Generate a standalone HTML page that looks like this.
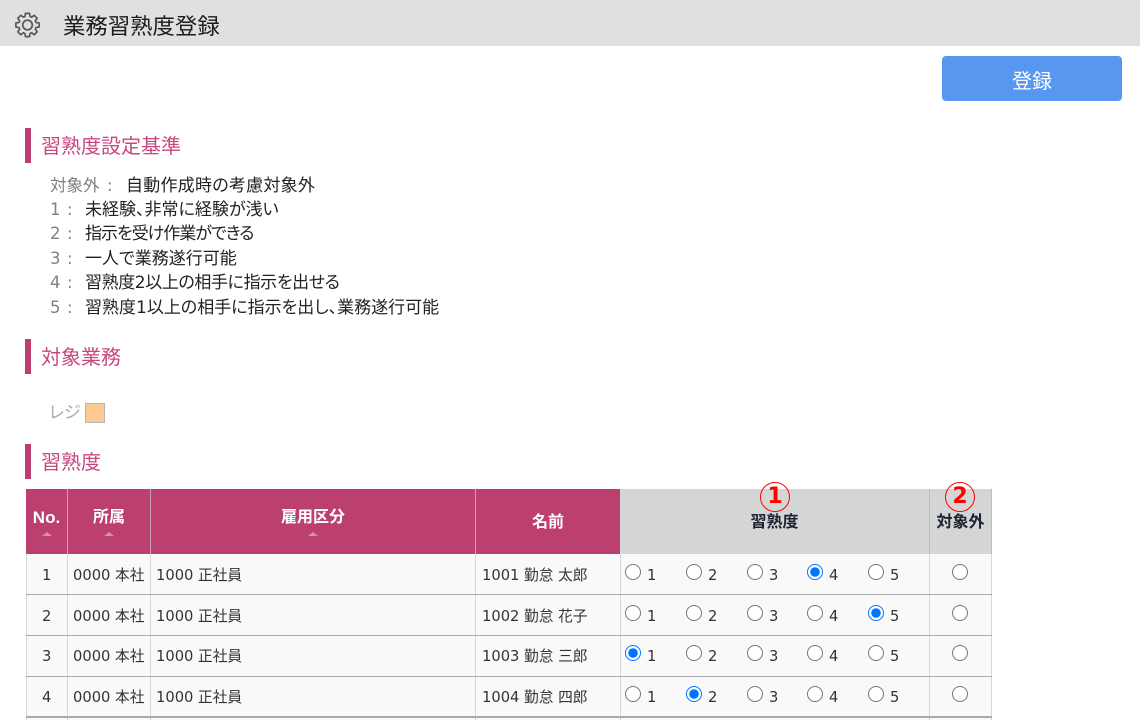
<!DOCTYPE html>
<html lang="ja">
<head>
<meta charset="utf-8">
<title>業務習熟度登録</title>
<style>
html,body{margin:0;padding:0;width:1140px;height:720px;overflow:hidden;background:#fff}
body{position:relative;font-family:"Liberation Sans","Noto Sans CJK JP",sans-serif;color:#222}
.a{position:absolute;white-space:nowrap}
.bar{position:absolute;left:25px;width:6px;height:35px;background:#bb4070}
.sec{position:absolute;left:41px;font-size:20px;line-height:28px;color:#c9477f;white-space:nowrap}
.k{position:absolute;font-family:"DejaVu Sans","Noto Sans CJK JP",sans-serif;font-size:16.5px;line-height:24px;color:#808080;white-space:nowrap;font-feature-settings:"palt"}
.v{position:absolute;font-family:"DejaVu Sans","Noto Sans CJK JP",sans-serif;font-size:17px;line-height:24px;color:#222;white-space:nowrap;font-feature-settings:"palt"}
.th{position:absolute;top:489px;height:65px;box-sizing:border-box;text-align:center;font-weight:bold;font-size:16px;color:#fff;background:#bb4070;line-height:20px}
.th.g{background:#d4d5d5;color:#1c2230}
.tri{position:absolute;left:50%;margin-left:-5px;top:43px;width:0;height:0;border-left:5px solid transparent;border-right:5px solid transparent;border-bottom:4px solid #d98fae}
.vl{position:absolute;width:1px;top:554px;height:166px;background:#d6d6d6}
.hl{position:absolute;left:26px;width:966px;height:1px;background:#ababab}
.row{position:absolute;left:26px;width:966px;background:#f9f9f9}
.t{position:absolute;font-family:"DejaVu Sans","Noto Sans CJK JP",sans-serif;font-size:14.7px;line-height:20px;color:#333;white-space:nowrap}
.r{position:absolute;margin:0;width:16px;height:16px;accent-color:#0075ff}
.c{position:absolute;width:30px;height:30px;box-sizing:border-box;border:1.5px solid #f00;border-radius:50%;color:#f00;font-family:"DejaVu Sans",sans-serif;font-size:22px;line-height:27px;font-weight:bold;text-align:center;background:transparent}
</style>
</head>
<body>
<div class="a" style="left:0;top:0;width:1140px;height:46px;background:#e0e0de"></div>
<svg class="a" style="left:14px;top:12px" width="27" height="27" viewBox="0 0 27 27" fill="none" stroke="#555" stroke-width="1.7" stroke-linejoin="round">
<path transform="translate(13.5 13) scale(.96)" d="M-2.14-12.11L2.14-12.11L2.69-8.8L4.32-8.12L7.05-10.08L10.08-7.05L8.12-4.32L8.8-2.69L12.11-2.14L12.11 2.14L8.8 2.69L8.12 4.32L10.08 7.05L7.05 10.08L4.32 8.12L2.69 8.8L2.14 12.11L-2.14 12.11L-2.69 8.8L-4.32 8.12L-7.05 10.08L-10.08 7.05L-8.12 4.32L-8.8 2.69L-12.11 2.14L-12.11-2.14L-8.8-2.69L-8.12-4.32L-10.08-7.05L-7.05-10.08L-4.32-8.12L-2.69-8.8Z"/>
<circle cx="13.5" cy="13" r="4.8"/>
</svg>
<div class="a" style="left:63px;top:11px;font-size:22.4px;line-height:32px;color:#1c1c1c">業務習熟度登録</div>

<div class="a" style="left:942px;top:56px;width:180px;height:45px;border-radius:4px;background:#5897f0;color:#fff;font-size:20px;line-height:52px;text-align:center">登録</div>

<div class="bar" style="top:128px"></div>
<div class="sec" style="top:133px">習熟度設定基準</div>
<div class="k" style="left:50px;top:174px">対象外</div><div class="k" style="left:107px;top:174px">:</div><div class="v" style="left:126px;top:174px;letter-spacing:.25px">自動作成時の考慮対象外</div>
<div class="k" style="left:50px;top:198px">1</div><div class="k" style="left:67px;top:198px">:</div><div class="v" style="left:85px;top:198px">未経験、非常に経験が浅い</div>
<div class="k" style="left:50px;top:222px">2</div><div class="k" style="left:67px;top:222px">:</div><div class="v" style="left:85px;top:222px;letter-spacing:-1px">指示を受け作業ができる</div>
<div class="k" style="left:50px;top:247px">3</div><div class="k" style="left:67px;top:247px">:</div><div class="v" style="left:85px;top:247px">一人で業務遂行可能</div>
<div class="k" style="left:50px;top:271px">4</div><div class="k" style="left:67px;top:271px">:</div><div class="v" style="left:85px;top:271px;letter-spacing:-.4px">習熟度2以上の相手に指示を出せる</div>
<div class="k" style="left:50px;top:296px">5</div><div class="k" style="left:67px;top:296px">:</div><div class="v" style="left:85px;top:296px">習熟度1以上の相手に指示を出し、業務遂行可能</div>

<div class="bar" style="top:339px"></div>
<div class="sec" style="top:344px">対象業務</div>
<div class="k" style="left:49px;top:401px;font-size:17px;color:#aaa">レジ</div>
<div class="a" style="left:85px;top:403px;width:20px;height:20px;box-sizing:border-box;background:#ffc993;border:1px solid #b5b5b5"></div>

<div class="bar" style="top:444px"></div>
<div class="sec" style="top:449px">習熟度</div>

<div class="th" style="left:26px;width:41px;padding-top:19px;font-size:17px">No.<i class="tri"></i></div>
<div class="th" style="left:67px;width:83px;padding-top:19px;border-left:1px solid #c9a0b4">所属<i class="tri"></i></div>
<div class="th" style="left:150px;width:325px;padding-top:19px;border-left:1px solid #c9a0b4">雇用区分<i class="tri"></i></div>
<div class="th" style="left:475px;width:145px;padding-top:24px;border-left:1px solid #c9a0b4">名前</div>
<div class="th g" style="left:620px;width:309px;padding-top:24px">習熟度</div>
<div class="th g" style="left:929px;width:63px;padding-top:24px;border-left:1px solid #bdbdbd;border-right:1px solid #bdbdbd">対象外</div>

<div class="row" style="top:554px;height:166px"></div>
<div class="vl" style="left:26px"></div><div class="vl" style="left:67px"></div><div class="vl" style="left:150px"></div><div class="vl" style="left:475px"></div><div class="vl" style="left:620px"></div><div class="vl" style="left:929px"></div><div class="vl" style="left:991px"></div>
<div class="hl" style="top:594px"></div>
<div class="hl" style="top:635px"></div>
<div class="hl" style="top:676px"></div>
<div class="hl" style="top:716px;height:2px"></div>

<div class="t" style="left:42px;top:566px">1</div><div class="t" style="left:73px;top:566px">0000 本社</div><div class="t" style="left:156px;top:566px">1000 正社員</div><div class="t" style="left:482px;top:566px">1001 勤怠 太郎</div>
<div class="t" style="left:42px;top:607px">2</div><div class="t" style="left:73px;top:607px">0000 本社</div><div class="t" style="left:156px;top:607px">1000 正社員</div><div class="t" style="left:482px;top:607px">1002 勤怠 花子</div>
<div class="t" style="left:42px;top:647px">3</div><div class="t" style="left:73px;top:647px">0000 本社</div><div class="t" style="left:156px;top:647px">1000 正社員</div><div class="t" style="left:482px;top:647px">1003 勤怠 三郎</div>
<div class="t" style="left:42px;top:688px">4</div><div class="t" style="left:73px;top:688px">0000 本社</div><div class="t" style="left:156px;top:688px">1000 正社員</div><div class="t" style="left:482px;top:688px">1004 勤怠 四郎</div>

<input class="r" type="radio" style="left:625px;top:564px"><span class="t" style="left:647px;top:566px">1</span>
<input class="r" type="radio" style="left:686px;top:564px"><span class="t" style="left:708px;top:566px">2</span>
<input class="r" type="radio" style="left:747px;top:564px"><span class="t" style="left:769px;top:566px">3</span>
<input class="r" type="radio" checked style="left:807px;top:564px"><span class="t" style="left:829px;top:566px">4</span>
<input class="r" type="radio" style="left:868px;top:564px"><span class="t" style="left:890px;top:566px">5</span>
<input class="r" type="radio" style="left:952px;top:564px">

<input class="r" type="radio" style="left:625px;top:605px"><span class="t" style="left:647px;top:607px">1</span>
<input class="r" type="radio" style="left:686px;top:605px"><span class="t" style="left:708px;top:607px">2</span>
<input class="r" type="radio" style="left:747px;top:605px"><span class="t" style="left:769px;top:607px">3</span>
<input class="r" type="radio" style="left:807px;top:605px"><span class="t" style="left:829px;top:607px">4</span>
<input class="r" type="radio" checked style="left:868px;top:605px"><span class="t" style="left:890px;top:607px">5</span>
<input class="r" type="radio" style="left:952px;top:605px">

<input class="r" type="radio" checked style="left:625px;top:645px"><span class="t" style="left:647px;top:647px">1</span>
<input class="r" type="radio" style="left:686px;top:645px"><span class="t" style="left:708px;top:647px">2</span>
<input class="r" type="radio" style="left:747px;top:645px"><span class="t" style="left:769px;top:647px">3</span>
<input class="r" type="radio" style="left:807px;top:645px"><span class="t" style="left:829px;top:647px">4</span>
<input class="r" type="radio" style="left:868px;top:645px"><span class="t" style="left:890px;top:647px">5</span>
<input class="r" type="radio" style="left:952px;top:645px">

<input class="r" type="radio" style="left:625px;top:686px"><span class="t" style="left:647px;top:688px">1</span>
<input class="r" type="radio" checked style="left:686px;top:686px"><span class="t" style="left:708px;top:688px">2</span>
<input class="r" type="radio" style="left:747px;top:686px"><span class="t" style="left:769px;top:688px">3</span>
<input class="r" type="radio" style="left:807px;top:686px"><span class="t" style="left:829px;top:688px">4</span>
<input class="r" type="radio" style="left:868px;top:686px"><span class="t" style="left:890px;top:688px">5</span>
<input class="r" type="radio" style="left:952px;top:686px">

<div class="c" style="left:760px;top:482px">1</div>
<div class="c" style="left:945px;top:482px">2</div>
</body>
</html>
